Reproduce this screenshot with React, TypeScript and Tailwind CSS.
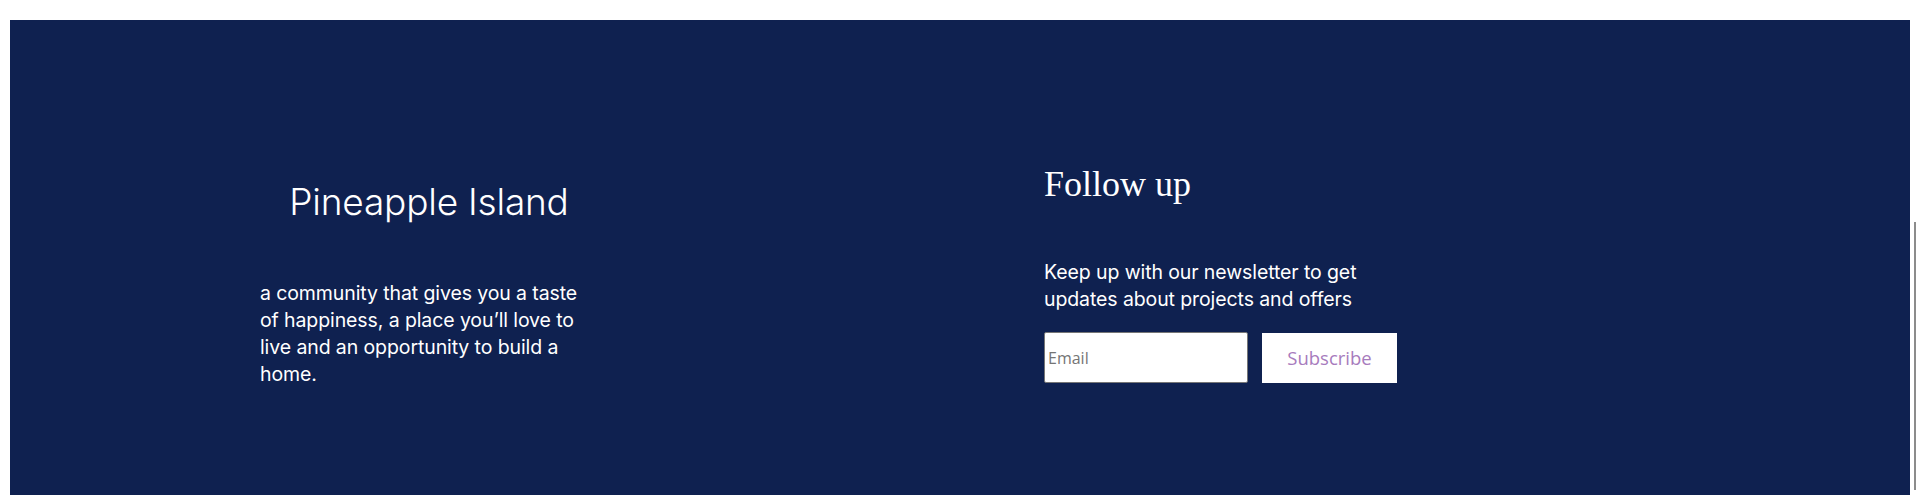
import { useState } from 'react'

const sans = 'font-["Inter",sans-serif]'

export default function App() {
  const [email, setEmail] = useState('')

  return (
    <div className="flex h-[504px] w-full bg-white pl-[10px] pt-[20px]">
      <footer className="flex h-[475px] w-[1900px] shrink-0 items-start bg-[#0f2150] pl-[250px] pt-[144px] text-white">
        <div className={`mt-[16px] flex w-[338px] flex-col ${sans}`}>
          <h2 className="text-center text-[37px] font-light leading-[1.21] tracking-[-0.2px]">
            Pineapple Island
          </h2>
          <p className="mt-[55px] w-[328px] text-[19.5px] leading-[27px] tracking-[-0.1px]">
            a community that gives you a taste of happiness, a place you’ll
            love to live and an opportunity to build a home.
          </p>
        </div>

        <div className="ml-[446px] flex flex-col">
          <h3 className='font-["Liberation_Serif",serif] text-[36px] leading-[1.15]'>
            Follow up
          </h3>
          <p className={`mt-[54px] w-[330px] text-[19.5px] leading-[27px] tracking-[-0.1px] ${sans}`}>
            Keep up with our newsletter to get updates about projects and
            offers
          </p>
          <form
            className="mt-[19px] flex items-center"
            onSubmit={(e) => e.preventDefault()}
          >
            <input
              type="email"
              value={email}
              onChange={(e) => setEmail(e.target.value)}
              placeholder="Email"
              className='h-[51px] w-[204px] rounded-[2px] border border-[#767676] bg-white pl-[3px] font-["Open_Sans",sans-serif] text-[16px] text-[#333] outline-none placeholder:text-[#757575]'
            />
            <button
              type="submit"
              className='ml-[14px] h-[50px] w-[135px] bg-white font-["Open_Sans",sans-serif] text-[18.5px] text-[#a77bbd]'
            >
              Subscribe
            </button>
          </form>
        </div>
      </footer>
      <div className="ml-[4px] mt-[202px] h-[268px] w-[2px] bg-[#8c8c8c]" />
    </div>
  )
}
